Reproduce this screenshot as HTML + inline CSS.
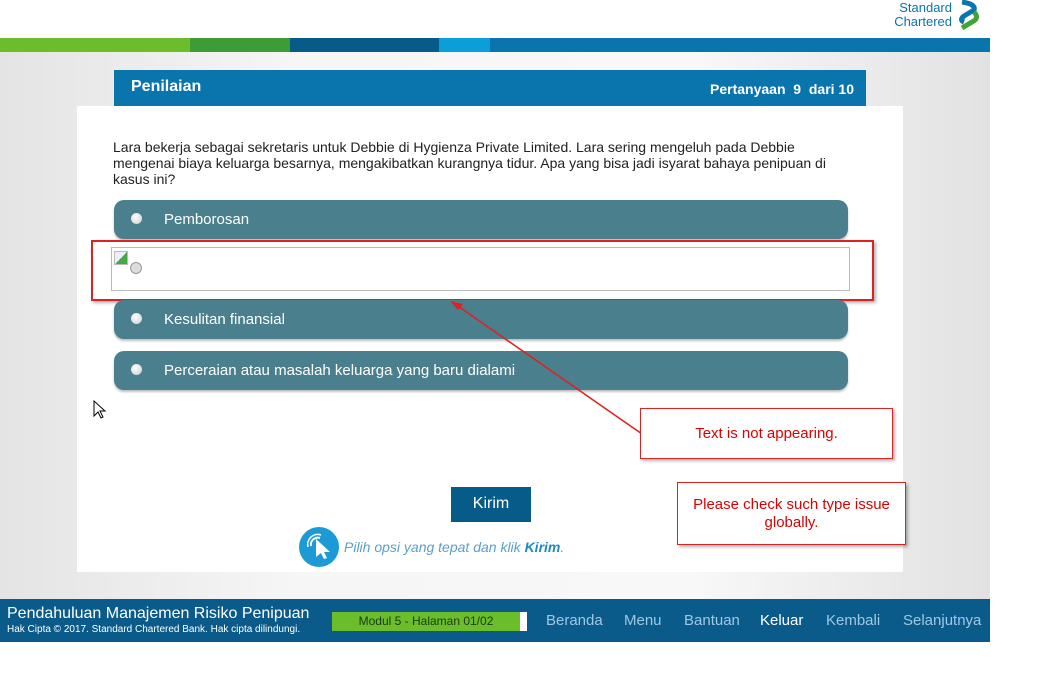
<!DOCTYPE html>
<html><head><meta charset="utf-8"><style>
*{margin:0;padding:0;box-sizing:border-box}
body{width:1039px;height:679px;background:#fff;position:relative;font-family:"Liberation Sans",sans-serif;overflow:hidden}
.a{position:absolute}
.opt{position:absolute;left:114px;width:734px;height:39px;background:#4a7f8d;border-radius:10px;color:#fff;font-size:15px;line-height:39px;padding-left:50px;box-shadow:0 2px 2px rgba(0,0,0,.25)}
.opt:before{content:"";position:absolute;left:17px;top:13px;width:11px;height:11px;border-radius:50%;background:radial-gradient(circle at 40% 35%,#fff,#ccc)}
.nav{position:absolute;top:612px;color:#9fc8e4;font-size:15px}
</style></head><body>
<div class="a" style="left:880px;top:1px;color:#0a74ad;font-size:13px;line-height:14px;text-align:right;width:72px">Standard<br>Chartered</div>
<svg class="a" style="left:956px;top:0" width="26" height="32"><path d="M6 2 Q20 4 18 10 L8 16 Q3 20 8 22" stroke="#0a74ad" stroke-width="5" fill="none"/><path d="M18 12 Q24 18 16 22 L6 28" stroke="#3ea539" stroke-width="5" fill="none"/></svg>
<div class="a" style="left:0;top:38px;width:190px;height:14px;background:#6bbd2b"></div>
<div class="a" style="left:190px;top:38px;width:100px;height:14px;background:#3e9c37"></div>
<div class="a" style="left:290px;top:38px;width:149px;height:14px;background:#065b88"></div>
<div class="a" style="left:439px;top:38px;width:51px;height:14px;background:#0b9fd9"></div>
<div class="a" style="left:490px;top:38px;width:500px;height:14px;background:#0a74ad"></div>
<div class="a" style="left:0;top:52px;width:990px;height:547px;background:linear-gradient(90deg,#e4e4e4,#f6f6f6 30%,#f8f8f8 70%,#e2e2e2)"></div>
<div class="a" style="left:114px;top:70px;width:752px;height:36px;background:#0a74ad;color:#fff;font-weight:bold;font-size:16px;line-height:33px;padding:0 12px 0 17px"><span>Penilaian</span><span style="float:right;font-size:14px;line-height:38px">Pertanyaan &nbsp;9 &nbsp;dari 10</span></div>
<div class="a" style="left:77px;top:106px;width:826px;height:466px;background:#fff"></div>
<div class="a" style="left:113px;top:139px;width:745px;font-size:14px;line-height:16px;color:#222">Lara bekerja sebagai sekretaris untuk Debbie di Hygienza Private Limited. Lara sering mengeluh pada Debbie mengenai biaya keluarga besarnya, mengakibatkan kurangnya tidur. Apa yang bisa jadi isyarat bahaya penipuan di kasus ini?</div>
<div class="opt" style="top:200px">Pemborosan</div>
<div class="a" style="left:111px;top:247px;width:739px;height:44px;border:1px solid #bbb;background:#fff"></div>
<div class="a" style="left:114px;top:251px;width:14px;height:14px;border:1px solid #bbb;background:linear-gradient(135deg,#eef 50%,#4a4 50%)"></div>
<div class="a" style="left:130px;top:262px;width:12px;height:12px;border-radius:50%;border:1px solid #999;background:#ddd"></div>
<div class="a" style="left:91px;top:240px;width:783px;height:61px;border:2px solid #d22;box-shadow:2px 2px 3px rgba(0,0,0,.3)"></div>
<div class="opt" style="top:300px">Kesulitan finansial</div>
<div class="opt" style="top:351px">Perceraian atau masalah keluarga yang baru dialami</div>
<svg class="a" style="left:0;top:0" width="1039" height="679"><line x1="655" y1="443" x2="455" y2="304" stroke="#e02020" stroke-width="1.5"/><path d="M450 301 L463 304 L458 310 Z" fill="#e02020"/><path d="M94 401 L94 416 L98 412 L101 418 L103 417 L100 411 L105 411 Z" fill="#fff" stroke="#000" stroke-width="1"/></svg>
<div class="a" style="left:640px;top:408px;width:253px;height:51px;border:1.5px solid #d22;background:#fff;color:#d00;font-size:15px;text-align:center;line-height:49px;box-shadow:2px 2px 3px rgba(0,0,0,.3)">Text is not appearing.</div>
<div class="a" style="left:677px;top:482px;width:229px;height:63px;border:1.5px solid #d22;background:#fff;color:#d00;font-size:15px;text-align:center;line-height:18px;padding-top:13px;box-shadow:2px 2px 3px rgba(0,0,0,.3)">Please check such type issue globally.</div>
<div class="a" style="left:451px;top:487px;width:80px;height:35px;background:#065b88;color:#fff;font-size:16px;text-align:center;line-height:34px">Kirim</div>
<div class="a" style="left:299px;top:527px;width:40px;height:40px;border-radius:50%;background:#1b9ad6"></div>
<svg class="a" style="left:299px;top:527px" width="40" height="40"><path d="M17 12 L31 25 L25 25 L28 31 L25 32 L22 26 L17 30 Z" fill="#fff"/><path d="M12 19 A7 7 0 0 1 21 11" stroke="#fff" stroke-width="2" fill="none"/><path d="M9 20 A10 10 0 0 1 22 8" stroke="#fff" stroke-width="1.5" fill="none"/></svg>
<div class="a" style="left:344px;top:539px;font-size:14px;font-style:italic;color:#5aa0c8">Pilih opsi yang tepat dan klik <b style="color:#1b8ac6">Kirim</b>.</div>
<div class="a" style="left:0;top:599px;width:990px;height:43px;background:#0a5b8a"></div>
<div class="a" style="left:7px;top:605px;color:#fff;font-size:16px">Pendahuluan Manajemen Risiko Penipuan</div>
<div class="a" style="left:7px;top:624px;color:#fff;font-size:10px">Hak Cipta © 2017. Standard Chartered Bank. Hak cipta dilindungi.</div>
<div class="a" style="left:332px;top:612px;width:195px;height:19px;background:#6bbd2b;border-right:7px solid #fff;color:#1a3a1a;font-size:12px;text-align:center;line-height:19px">Modul 5 - Halaman 01/02</div>
<div class="nav" style="left:546px">Beranda</div>
<div class="nav" style="left:624px">Menu</div>
<div class="nav" style="left:684px">Bantuan</div>
<div class="nav" style="left:760px;color:#fff">Keluar</div>
<div class="nav" style="left:826px">Kembali</div>
<div class="nav" style="left:903px">Selanjutnya</div>
</body></html>
